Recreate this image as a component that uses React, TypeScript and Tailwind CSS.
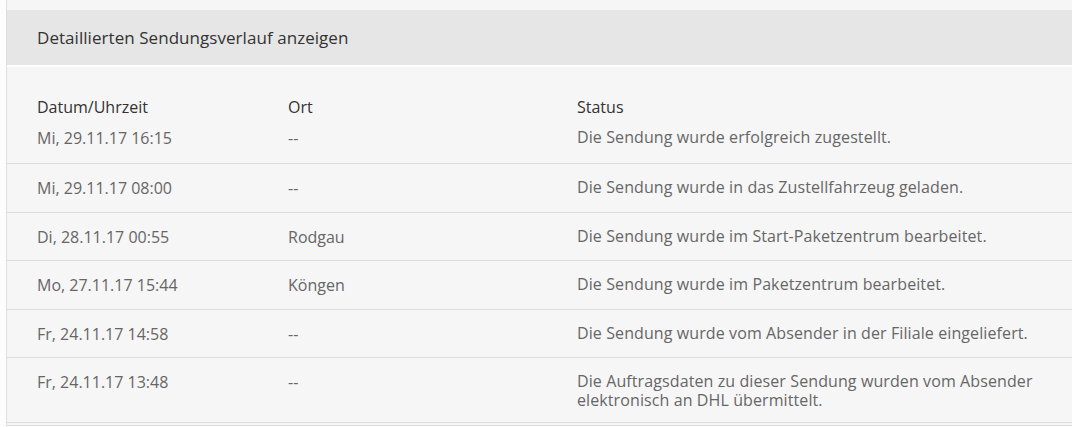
import React from "react";

const rows = [
  { d: "Mi, 29.11.17 16:15", o: "--", s: "Die Sendung wurde erfolgreich zugestellt." },
  { d: "Mi, 29.11.17 08:00", o: "--", s: "Die Sendung wurde in das Zustellfahrzeug geladen." },
  { d: "Di, 28.11.17 00:55", o: "Rodgau", s: "Die Sendung wurde im Start-Paketzentrum bearbeitet." },
  { d: "Mo, 27.11.17 15:44", o: "Köngen", s: "Die Sendung wurde im Paketzentrum bearbeitet." },
  { d: "Fr, 24.11.17 14:58", o: "--", s: "Die Sendung wurde vom Absender in der Filiale eingeliefert." },
  {
    d: "Fr, 24.11.17 13:48",
    o: "--",
    s: "Die Auftragsdaten zu dieser Sendung wurden vom Absender elektronisch an DHL übermittelt.",
  },
];

const pads = [
  "pt-0 pb-[15px]",
  "pt-[14px] pb-[14px]",
  "pt-[14px] pb-[13px]",
  "pt-[14px] pb-[14px]",
  "pt-[14px] pb-[13px]",
  "pt-[14px] pb-[12px]",
];

export default function App() {
  return (
    <div
      className="w-[1072px] h-[427px] overflow-hidden bg-[#fdfdfd] pl-[6px]"
      style={{ fontFamily: '"Open Sans", "Noto Sans", sans-serif' }}
    >
      <div className="border-l border-[#dedede] bg-[#f6f6f6] pt-[10px]">
        <div className="h-[55px] bg-[#e6e6e6] flex items-center pl-[30px] text-[17px] text-[#333] tracking-[0.05px]">
          Detaillierten Sendungsverlauf anzeigen
        </div>
        <div className="h-[2px] bg-white" />
        <div className="pt-[30px]">
          <div className="grid grid-cols-[251px_289px_1fr] pl-[30px] text-[16px] text-[#333] leading-[20px] h-[31px]">
            <div>Datum/Uhrzeit</div>
            <div>Ort</div>
            <div>Status</div>
          </div>
          {rows.map((r, i) => (
            <div
              key={i}
              className={`grid grid-cols-[251px_289px_1fr] pl-[30px] text-[16px] text-[#666] leading-[20px] border-b border-[#dcdcdc] ${pads[i]}`}
            >
              <div>{r.d}</div>
              <div>{r.o}</div>
              <div className="pr-[30px] leading-[19px] tracking-[0.1px]">{r.s}</div>
            </div>
          ))}
          <div className="h-[2px]" />
          <div className="h-px bg-[#dcdcdc]" />
        </div>
      </div>
    </div>
  );
}
